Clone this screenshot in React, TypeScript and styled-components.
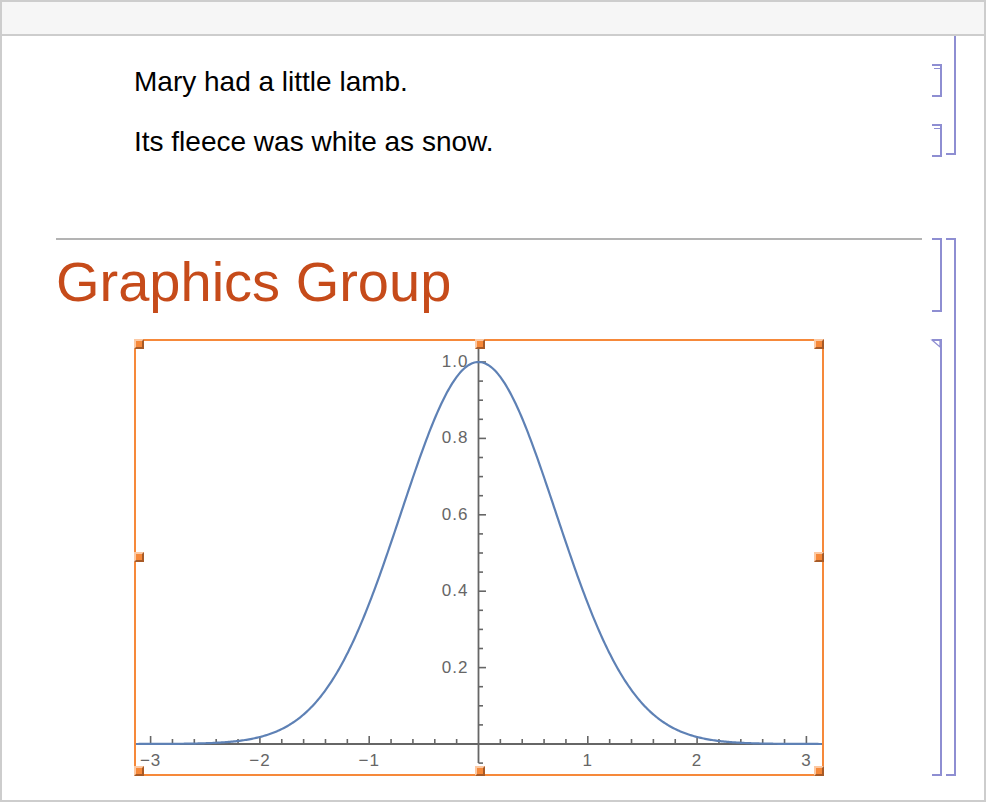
import React from "react";
import styled, { createGlobalStyle } from "styled-components";

const Global = createGlobalStyle`
  html, body { margin: 0; padding: 0; background: #fff; }
  body { font-family: "Liberation Sans", Arial, sans-serif; }
  *, *::before, *::after { box-sizing: border-box; }
`;

const BRACKET = "#8e8ed2";
const ORANGE = "#f6893a";

const Window = styled.div`
  width: 986px;
  height: 802px;
  border: 2px solid #cdcdcd;
  display: flex;
  flex-direction: column;
  background: #fff;
  overflow: hidden;
`;

const Toolbar = styled.div`
  flex: none;
  height: 34px;
  background: #f6f6f6;
  border-bottom: 2px solid #cdcdcd;
`;

const Notebook = styled.div`
  flex: 1;
  display: flex;
  flex-direction: column;
  padding-right: 28px;
`;

const Group = styled.div<{ $gapTop?: number }>`
  display: grid;
  grid-template-columns: 1fr 10px;
  column-gap: 4px;
  margin-top: ${(p) => p.$gapTop ?? 0}px;
`;

const GroupCells = styled.div<{ $padTop?: number; $gap: number }>`
  display: flex;
  flex-direction: column;
  gap: ${(p) => p.$gap}px;
  padding-top: ${(p) => p.$padTop ?? 0}px;
`;

const GroupBracket = styled.div<{ $openTop?: boolean }>`
  border-right: 2px solid ${BRACKET};
  border-bottom: 2px solid ${BRACKET};
  border-top: ${(p) => (p.$openTop ? "none" : `2px solid ${BRACKET}`)};
`;

const Cell = styled.div<{ $height: number }>`
  display: grid;
  grid-template-columns: 1fr 10px;
  column-gap: 10px;
  height: ${(p) => p.$height}px;
`;

const CellBracket = styled.div<{ $mark?: "text" | "graphics" }>`
  position: relative;
  border-right: 2px solid ${BRACKET};
  border-top: 2px solid ${BRACKET};
  border-bottom: 2px solid ${BRACKET};
  &::after {
    content: "";
    display: ${(p) => (p.$mark === "text" ? "block" : "none")};
    position: absolute;
    top: 2px;
    left: 2px;
    width: 6px;
    height: 1px;
    background: ${BRACKET};
  }
`;

const BracketMark = styled.svg`
  position: absolute;
  top: -2px;
  left: 0;
  overflow: visible;
`;

const TextCell = styled.div`
  padding-left: 132px;
  padding-top: 2px;
  font-size: 28px;
  line-height: 31px;
  color: #000;
  white-space: nowrap;
`;

const SectionCell = styled.div`
  margin-left: 54px;
  border-top: 2px solid #b3b3b3;
  padding-top: 11px;
  font-size: 56px;
  line-height: 61px;
  color: #c64b1a;
  white-space: nowrap;
`;

const GraphicsCell = styled.div`
  padding-left: 132px;
`;

const GraphicBox = styled.div`
  position: relative;
  width: 690px;
  height: 437px;
`;

const Selection = styled.div`
  position: absolute;
  inset: 0;
  border: 2px solid ${ORANGE};
  pointer-events: none;
`;

const Handle = styled.div<{ $h: "l" | "c" | "r"; $v: "t" | "m" | "b" }>`
  position: absolute;
  width: 10px;
  height: 10px;
  background: ${ORANGE};
  border-top: 2px solid #fcc9a3;
  border-left: 2px solid #fcc9a3;
  border-right: 2px solid #a85a26;
  border-bottom: 2px solid #a85a26;
  ${(p) => (p.$h === "l" ? "left: 0;" : p.$h === "r" ? "right: 0;" : "left: 341px;")}
  ${(p) => (p.$v === "t" ? "top: 0;" : p.$v === "b" ? "bottom: 0;" : "top: 213px;")}
`;

const PlotSvg = styled.svg`
  display: block;
  font-family: "Liberation Sans", Arial, sans-serif;
`;

const W = 690;
const H = 437;
const OX = 344.5;
const UX = 109.3;
const OY = 405;
const UY = 382;
const sx = (x: number) => OX + x * UX;
const sy = (y: number) => OY - y * UY;

function Plot() {
  const pts: string[] = [];
  const n = 500;
  for (let i = 0; i <= n; i++) {
    const x = -Math.PI + (2 * Math.PI * i) / n;
    pts.push(`${sx(x).toFixed(2)},${sy(Math.exp(-x * x)).toFixed(2)}`);
  }
  const xticks: React.ReactNode[] = [];
  for (let k = -15; k <= 15; k++) {
    if (k === 0) continue;
    const major = k % 5 === 0;
    const X = sx(k * 0.2);
    xticks.push(
      <line key={`xt${k}`} x1={X} x2={X} y1={OY} y2={OY - (major ? 8 : 5)} stroke="#666" strokeWidth={1.6} />
    );
  }
  const yticks: React.ReactNode[] = [];
  for (let k = -1; k <= 21; k++) {
    if (k === 0) continue;
    const major = k % 4 === 0;
    const Y = sy(k * 0.05);
    yticks.push(
      <line key={`yt${k}`} x1={OX} x2={OX + (major ? 7.5 : 4.5)} y1={Y} y2={Y} stroke="#666" strokeWidth={1.6} />
    );
  }
  const xl = [-3, -2, -1, 1, 2, 3];
  const yl = [0.2, 0.4, 0.6, 0.8, 1.0];
  return (
    <PlotSvg width={W} height={H} viewBox={`0 0 ${W} ${H}`}>
      <line x1={0} x2={W} y1={OY} y2={OY} stroke="#666" strokeWidth={1.8} />
      <line x1={OX} x2={OX} y1={sy(1.05)} y2={sy(-0.05)} stroke="#666" strokeWidth={1.8} />
      {xticks}
      {yticks}
      {xl.map((v) => (
        <text key={`xl${v}`} x={sx(v)} y={OY + 22} fontSize={17} letterSpacing={1} fill="#666" textAnchor="middle">
          {v < 0 ? `\u2212${-v}` : `${v}`}
        </text>
      ))}
      {yl.map((v) => (
        <text key={`yl${v}`} x={OX - 10} y={sy(v) + 5} fontSize={17} letterSpacing={1} fill="#666" textAnchor="end">
          {v.toFixed(1)}
        </text>
      ))}
      <polyline points={pts.join(" ")} fill="none" stroke="#5e81b5" strokeWidth={2.2} strokeLinejoin="round" />
    </PlotSvg>
  );
}

export default function App() {
  const handles: Array<["l" | "c" | "r", "t" | "m" | "b"]> = [
    ["l", "t"], ["c", "t"], ["r", "t"],
    ["l", "m"], ["r", "m"],
    ["l", "b"], ["c", "b"], ["r", "b"],
  ];
  return (
    <>
      <Global />
      <Window>
        <Toolbar />
        <Notebook>
          <Group>
            <GroupCells $padTop={28} $gap={29}>
              <Cell $height={31}>
                <TextCell>Mary had a little lamb.</TextCell>
                <CellBracket $mark="text" />
              </Cell>
              <Cell $height={31}>
                <TextCell>Its fleece was white as snow.</TextCell>
                <CellBracket $mark="text" />
              </Cell>
            </GroupCells>
            <GroupBracket $openTop />
          </Group>
          <Group $gapTop={83}>
            <GroupCells $gap={28}>
              <Cell $height={73}>
                <SectionCell>Graphics Group</SectionCell>
                <CellBracket />
              </Cell>
              <Cell $height={437}>
                <GraphicsCell>
                  <GraphicBox>
                    <Plot />
                    <Selection />
                    {handles.map(([h, v]) => (
                      <Handle key={h + v} $h={h} $v={v} />
                    ))}
                  </GraphicBox>
                </GraphicsCell>
                <CellBracket $mark="graphics">
                  <BracketMark width={10} height={10}>
                    <path d="M0 1 L8 1 L8 8 Z" fill="none" stroke={BRACKET} strokeWidth={1.2} />
                  </BracketMark>
                </CellBracket>
              </Cell>
            </GroupCells>
            <GroupBracket />
          </Group>
        </Notebook>
      </Window>
    </>
  );
}
